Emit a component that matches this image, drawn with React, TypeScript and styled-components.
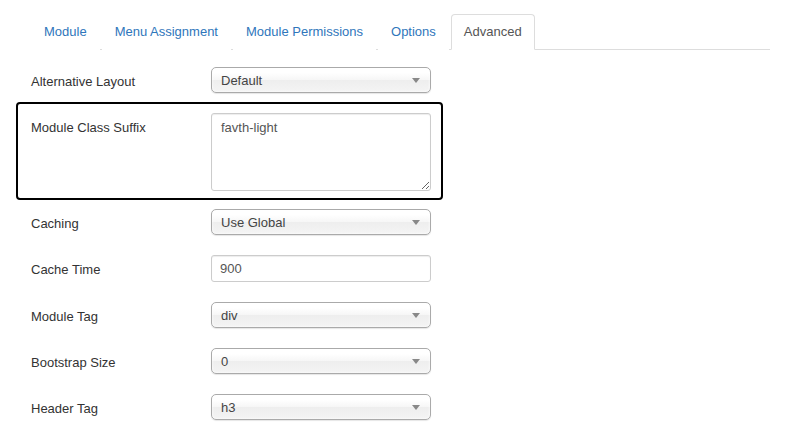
import React from "react";
import styled, { createGlobalStyle } from "styled-components";

const GlobalStyle = createGlobalStyle`
	html, body {
		margin: 0;
		padding: 0;
		background: #fff;
	}
	body {
		font-family: "Liberation Sans", Arial, sans-serif;
		font-size: 13px;
		color: #333;
	}
`;

const Page = styled.div`
	width: 739px;
	padding: 14px 0 0 31px;
`;

const Tabs = styled.ul`
	display: flex;
	list-style: none;
	margin: 0 0 17px;
	padding: 0;
	border-bottom: 1px solid #ddd;
`;

const Tab = styled.li<{ $active?: boolean }>`
	margin: 0 2px -1px 0;
	padding: 8px 12px;
	line-height: 18px;
	border: 1px solid ${(p) => (p.$active ? "#ddd" : "transparent")};
	border-bottom-color: ${(p) => (p.$active ? "#fff" : "transparent")};
	border-radius: 4px 4px 0 0;
	background: #fff;
	color: ${(p) => (p.$active ? "#555" : "#2f76bb")};
	cursor: pointer;
`;

const Form = styled.div`
	display: flex;
	flex-direction: column;
`;

const Row = styled.div<{ $gap?: number }>`
	display: grid;
	grid-template-columns: 180px 220px;
	width: 400px;
	padding-bottom: ${(p) => p.$gap ?? 20}px;
	position: relative;
`;

const Highlight = styled(Row)`
	&::before {
		content: "";
		position: absolute;
		top: -11px;
		left: -15px;
		right: -12px;
		bottom: 9px;
		border: 2px solid #000;
		border-radius: 4px;
		pointer-events: none;
	}
`;

const Label = styled.label`
	padding-top: 6px;
	line-height: 18px;
	color: #333;
`;

const Select = styled.div`
	position: relative;
	box-sizing: border-box;
	height: 26px;
	padding: 0 24px 0 9px;
	line-height: 25px;
	border: 1px solid #aaa;
	border-radius: 5px;
	background: linear-gradient(#fff 20%, #f6f6f6 50%, #eee 52%, #f4f4f4 100%);
	box-shadow: inset 0 0 3px #fff, 0 1px 1px rgba(0, 0, 0, 0.1);
	color: #444;

	&::after {
		content: "";
		position: absolute;
		right: 10px;
		top: 10px;
		border-left: 4px solid transparent;
		border-right: 4px solid transparent;
		border-top: 5px solid #888;
	}
`;

const Input = styled.input`
	box-sizing: border-box;
	height: 27px;
	padding: 4px 8px;
	border: 1px solid #ccc;
	border-radius: 3px;
	box-shadow: inset 0 1px 1px rgba(0, 0, 0, 0.075);
	font: inherit;
	color: #555;
	outline: none;
`;

const TextArea = styled.textarea`
	box-sizing: border-box;
	height: 78px;
	padding: 5px 9px;
	border: 1px solid #ccc;
	border-radius: 3px;
	box-shadow: inset 0 1px 1px rgba(0, 0, 0, 0.075);
	font: inherit;
	line-height: 18px;
	color: #555;
	outline: none;
	resize: vertical;
`;

const tabs = ["Module", "Menu Assignment", "Module Permissions", "Options", "Advanced"];

const App: React.FC = () => {
	return (
		<Page>
			<GlobalStyle />
			<Tabs>
				{tabs.map((t) => (
					<Tab key={t} $active={t === "Advanced"}>
						{t}
					</Tab>
				))}
			</Tabs>
			<Form>
				<Row>
					<Label>Alternative Layout</Label>
					<Select>Default</Select>
				</Row>
				<Highlight $gap={18}>
					<Label>Module Class Suffix</Label>
					<TextArea defaultValue="favth-light" />
				</Highlight>
				<Row>
					<Label>Caching</Label>
					<Select>Use Global</Select>
				</Row>
				<Row $gap={20}>
					<Label>Cache Time</Label>
					<Input defaultValue="900" />
				</Row>
				<Row>
					<Label>Module Tag</Label>
					<Select>div</Select>
				</Row>
				<Row>
					<Label>Bootstrap Size</Label>
					<Select>0</Select>
				</Row>
				<Row>
					<Label>Header Tag</Label>
					<Select>h3</Select>
				</Row>
			</Form>
		</Page>
	);
};

export default App;
